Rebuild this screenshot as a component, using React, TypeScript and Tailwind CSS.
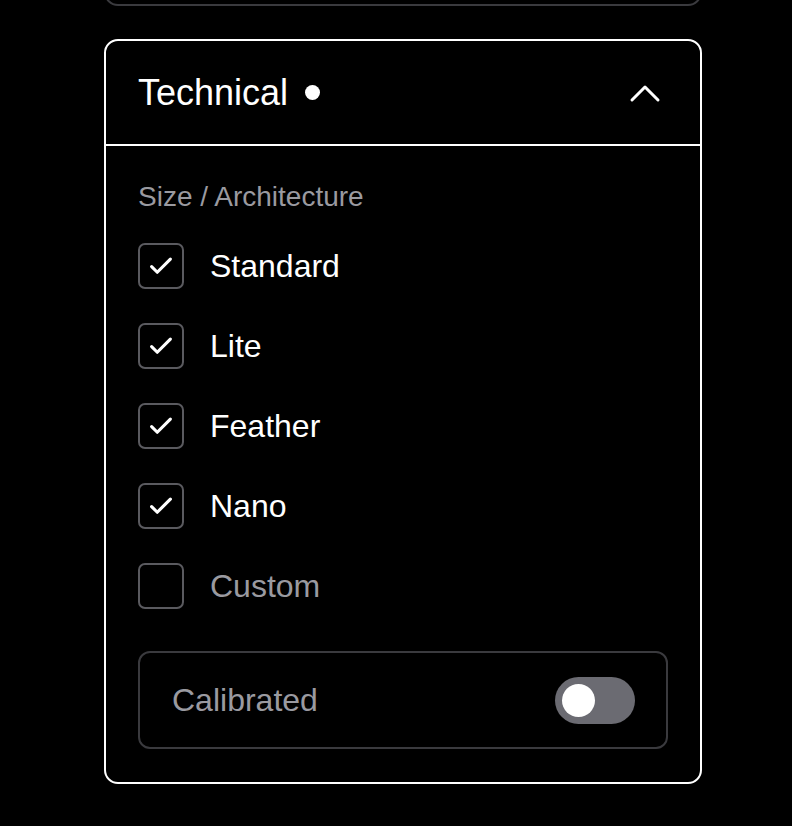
import React, { useState } from "react";

type Option = { id: string; label: string; checked: boolean };

const initialOptions: Option[] = [
    { id: "standard", label: "Standard", checked: true },
    { id: "lite", label: "Lite", checked: true },
    { id: "feather", label: "Feather", checked: true },
    { id: "nano", label: "Nano", checked: true },
    { id: "custom", label: "Custom", checked: false },
];

const CheckIcon = () => (
    <svg width="30" height="30" viewBox="0 0 24 24" fill="none" stroke="white" strokeWidth="2.5" strokeLinecap="round" strokeLinejoin="round">
        <path d="M4.5 12.5l4.5 4.5L19.5 6.5" />
    </svg>
);

const ChevronUp = () => (
    <svg width="32" height="20" viewBox="0 0 32 20" fill="none" stroke="white" strokeWidth="3" strokeLinecap="round" strokeLinejoin="round">
        <path d="M3 17L16 4l13 13" />
    </svg>
);

const App: React.FC = () => {
    const [options, setOptions] = useState<Option[]>(initialOptions);
    const [calibrated, setCalibrated] = useState(false);

    const toggle = (id: string) =>
        setOptions((prev) => prev.map((o) => (o.id === id ? { ...o, checked: !o.checked } : o)));

    return (
        <div className="h-[826px] overflow-hidden bg-black font-['Liberation_Sans',Arial,sans-serif] pl-[104px] flex flex-col">
            {/* previous card, scrolled mostly out of view */}
            <div className="shrink-0 w-[598px] h-[40px] -mt-[34px] border-2 border-[#3a3a3e] rounded-b-[14px]" />

            <div className="shrink-0 mt-[33px] w-[598px] border-2 border-white rounded-[14px]">
                <div className="flex items-center justify-between h-[105px] pl-[32px] pr-[39px] border-b-2 border-white">
                    <div className="flex items-center gap-[17px]">
                        <span className="text-white text-[36px] leading-none">Technical</span>
                        <span className="w-[15px] h-[15px] rounded-full bg-white" />
                    </div>
                    <ChevronUp />
                </div>

                <div className="px-[32px] pt-[35px] pb-[33px]">
                    <p className="text-[#9a9aa0] text-[28px] leading-[32px]">Size / Architecture</p>

                    <div className="mt-[30px] flex flex-col gap-[34px]">
                        {options.map((o) => (
                            <label key={o.id} className="flex items-center gap-[26px] cursor-pointer" onClick={() => toggle(o.id)}>
                                <span className="w-[46px] h-[46px] rounded-[7px] border-2 border-[#5a5a5f] flex items-center justify-center">
                                    {o.checked && <CheckIcon />}
                                </span>
                                <span className={`text-[32px] leading-none ${o.checked ? "text-white" : "text-[#9a9aa0]"}`}>
                                    {o.label}
                                </span>
                            </label>
                        ))}
                    </div>

                    <div className="mt-[42px] h-[98px] rounded-[12px] border-2 border-[#3a3a3e] flex items-center justify-between pl-[32px] pr-[31px]">
                        <span className="text-[#9a9aa0] text-[32px] leading-none">Calibrated</span>
                        <button
                            type="button"
                            onClick={() => setCalibrated(!calibrated)}
                            className="w-[80px] h-[47px] rounded-full bg-[#6b6b72] flex items-center px-[7px]"
                        >
                            <span className="w-[33px] h-[33px] rounded-full bg-white" />
                        </button>
                    </div>
                </div>
            </div>
        </div>
    );
};

export default App;
